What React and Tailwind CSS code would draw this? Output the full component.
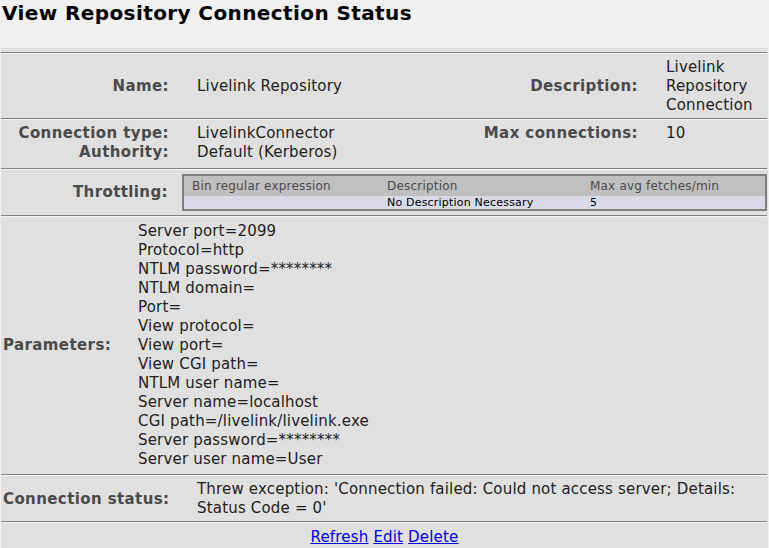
const Sep = () => (
  <div className="h-[2px] mr-[1px] border-t border-b border-t-[#808080] border-b-[#f4f4f4]" />
)

const Label = ({ children, className = '' }) => (
  <div className={`font-bold tracking-[0.4px] text-[#4a4a4a] whitespace-nowrap ${className}`}>{children}</div>
)

const params = [
  'Server port=2099',
  'Protocol=http',
  'NTLM password=********',
  'NTLM domain=',
  'Port=',
  'View protocol=',
  'View port=',
  'View CGI path=',
  'NTLM user name=',
  'Server name=localhost',
  'CGI path=/livelink/livelink.exe',
  'Server password=********',
  'Server user name=User',
]

export default function App() {
  return (
    <div className="min-h-[548px] bg-[#f0f0f0] font-['DejaVu_Sans',sans-serif] text-[15px] leading-[19px] tracking-[0.18px] text-[#222]">
      <h1 className="h-[48px] pl-[2px] pt-[2px] text-[20px] leading-[23px] tracking-[0.4px] font-bold text-black">
        View Repository Connection Status
      </h1>

      <div className="mx-[1px] bg-[#e0e0e0]">
        <div className="h-[4px]" />
        <Sep />

        {/* Name / Description */}
        <div className="grid grid-cols-[182px_1fr_auto_116px] items-center pt-[4px] pb-[3px]">
          <Label className="text-right pr-[14px]">Name:</Label>
          <div className="pl-[14px]">Livelink Repository</div>
          <Label className="text-right pr-[14px]">Description:</Label>
          <div className="pl-[14px] pr-[4px]">Livelink Repository Connection</div>
        </div>
        <Sep />

        {/* Connection type / Authority / Max connections */}
        <div className="grid grid-cols-[182px_1fr_auto_116px] pt-[4px] pb-[6px]">
          <Label className="text-right pr-[14px]">Connection type:</Label>
          <div className="pl-[14px]">LivelinkConnector</div>
          <Label className="text-right pr-[14px]">Max connections:</Label>
          <div className="pl-[14px]">10</div>
          <Label className="text-right pr-[14px]">Authority:</Label>
          <div className="pl-[14px]">Default (Kerberos)</div>
          <div />
          <div />
        </div>
        <Sep />

        {/* Throttling */}
        <div className="flex items-center pt-[4px] pb-[4px]">
          <Label className="w-[181px] shrink-0 text-right pr-[14px]">Throttling:</Label>
          <div className="flex-1 mr-[1px] border-2 border-[#808080] tracking-normal">
            <div className="grid grid-cols-[201px_203px_1fr] h-[20px] items-center bg-[#bfbfbf] text-[12px] leading-[20px] tracking-[0.2px] text-[#4a4a4a]">
              <div className="pl-[8px]">Bin regular expression</div>
              <div className="pl-[2px]">Description</div>
              <div className="pl-[2px]">Max avg fetches/min</div>
            </div>
            <div className="grid grid-cols-[201px_203px_1fr] h-[13px] bg-[#d9d9e8] text-[11px] leading-[13px] tracking-[0.2px] text-black">
              <div />
              <div className="pl-[2px]">No Description Necessary</div>
              <div className="pl-[2px]">5</div>
            </div>
          </div>
        </div>
        <Sep />

        {/* Parameters */}
        <div className="grid grid-cols-[137px_1fr] items-center pt-[5px] pb-[5px]">
          <Label className="pl-[2px]">Parameters:</Label>
          <div>
            {params.map(p => (
              <div key={p}>{p}</div>
            ))}
          </div>
        </div>
        <Sep />

        {/* Connection status */}
        <div className="grid grid-cols-[182px_1fr] items-center pt-[4px] pb-[3px]">
          <Label className="pl-[2px]">Connection status:</Label>
          <div className="pl-[14px] pr-[4px]">
            Threw exception: 'Connection failed: Could not access server; Details: Status Code = 0'
          </div>
        </div>
        <Sep />

        {/* Actions */}
        <div className="pt-[5px] pb-[1px] text-center">
          <a href="#" className="text-[#0000ee] underline">Refresh</a>{' '}
          <a href="#" className="text-[#0000ee] underline">Edit</a>{' '}
          <a href="#" className="text-[#0000ee] underline">Delete</a>
        </div>
      </div>
    </div>
  )
}
